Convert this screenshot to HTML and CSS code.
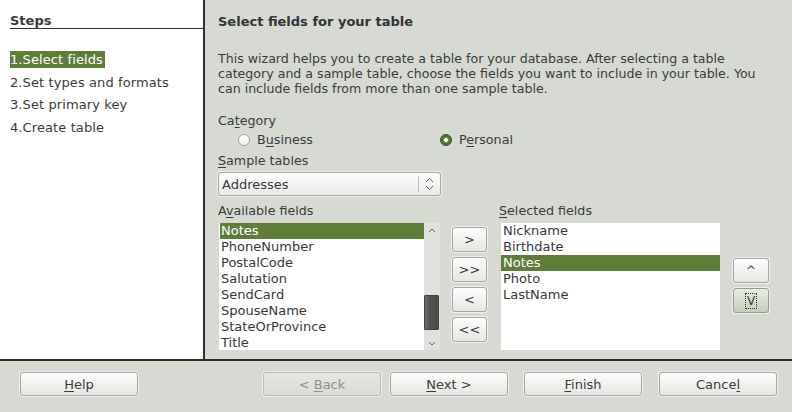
FILE: index.html
```html
<!DOCTYPE html>
<html>
<head>
<meta charset="utf-8">
<link rel="stylesheet" href="styles.css">
</head>
<body>
<div class="window">
  <div class="main">
    <aside class="steps">
      <div class="steps-title">Steps</div>
      <ul class="step-list">
        <li><span class="step active">1.Select fields</span></li>
        <li><span class="step">2.Set types and formats</span></li>
        <li><span class="step">3.Set primary key</span></li>
        <li><span class="step">4.Create table</span></li>
      </ul>
    </aside>
    <section class="content">
      <h1 class="title">Select fields for your table</h1>
      <p class="desc">This wizard helps you to create a table for your database. After selecting a table<br>category and a sample table, choose the fields you want to include in your table. You<br>can include fields from more than one sample table.</p>
      <div class="label label-category">Ca<u>t</u>egory</div>
      <div class="radios">
        <div class="radio"><span class="dot"></span><span>B<u>u</u>siness</span></div>
        <div class="radio"><span class="dot checked"></span><span>P<u>e</u>rsonal</span></div>
      </div>
      <div class="label label-sample"><u>S</u>ample tables</div>
      <div class="combo">
        <span class="combo-text">Addresses</span>
        <span class="combo-spin">
          <svg width="9" height="14" viewBox="0 0 9 14"><path d="M1 5 L4.5 1.5 L8 5" fill="none" stroke="#555" stroke-width="1"/><path d="M1 9 L4.5 12.5 L8 9" fill="none" stroke="#555" stroke-width="1"/></svg>
        </span>
      </div>
      <div class="fields">
        <div class="col-avail">
          <div class="label">A<u>v</u>ailable fields</div>
          <div class="list list-avail">
            <div class="rows">
              <div class="row selected">Notes</div>
              <div class="row">PhoneNumber</div>
              <div class="row">PostalCode</div>
              <div class="row">Salutation</div>
              <div class="row">SendCard</div>
              <div class="row">SpouseName</div>
              <div class="row">StateOrProvince</div>
              <div class="row">Title</div>
            </div>
            <div class="scrollbar">
              <div class="sb-arrow"><svg width="8" height="5" viewBox="0 0 8 5"><path d="M1 4 L4 1 L7 4" fill="none" stroke="#666" stroke-width="1"/></svg></div>
              <div class="sb-thumb"></div>
              <div class="sb-arrow sb-down"><svg width="8" height="5" viewBox="0 0 8 5"><path d="M1 1 L4 4 L7 1" fill="none" stroke="#666" stroke-width="1"/></svg></div>
            </div>
          </div>
        </div>
        <div class="col-moves">
          <div class="btn move-btn">&gt;</div>
          <div class="btn move-btn">&gt;&gt;</div>
          <div class="btn move-btn">&lt;</div>
          <div class="btn move-btn">&lt;&lt;</div>
        </div>
        <div class="col-sel">
          <div class="label"><u>S</u>elected fields</div>
          <div class="list list-sel">
            <div class="rows">
              <div class="row">Nickname</div>
              <div class="row">Birthdate</div>
              <div class="row selected">Notes</div>
              <div class="row">Photo</div>
              <div class="row">LastName</div>
            </div>
          </div>
        </div>
        <div class="col-order">
          <div class="btn order-btn">^</div>
          <div class="btn order-btn pressed"><span class="focus">V</span></div>
        </div>
      </div>
    </section>
  </div>
  <div class="footer">
    <div class="btn foot-btn"><span><u>H</u>elp</span></div>
    <div class="btn foot-btn disabled back"><span>&lt; <u>B</u>ack</span></div>
    <div class="btn foot-btn next"><span><u>N</u>ext &gt;</span></div>
    <div class="btn foot-btn finish"><span><u>F</u>inish</span></div>
    <div class="btn foot-btn cancel"><span>Cance<u>l</u></span></div>
  </div>
</div>
</body>
</html>
```
FILE: styles.css
```css
* { box-sizing: border-box; }
html, body { margin: 0; padding: 0; }
body {
  width: 792px;
  height: 412px;
  overflow: hidden;
  background: #d6dad3;
  font-family: "DejaVu Sans", sans-serif;
  color: #3a3a3a;
}
u { text-decoration: underline; text-underline-offset: 2px; text-decoration-thickness: 1px; }

.window { display: flex; flex-direction: column; height: 412px; }
.main { display: flex; height: 361px; border-bottom: 2px solid #2e302d; }

.steps { width: 205px; background: #fff; border-right: 2px solid #2e302d; }
.steps-title {
  margin: 13px 0 0 10px;
  font-size: 13px;
  font-weight: bold;
  line-height: 15px;
  border-bottom: 1px solid #2e302d;
}
.step-list {
  list-style: none;
  margin: 22px 0 0 10px;
  padding: 0;
  display: flex;
  flex-direction: column;
  gap: 5.7px;
  font-size: 13px;
}
.step { display: inline-block; line-height: 17px; padding-right: 2px; letter-spacing: 0.1px; }
.step.active { background: #5e7d3a; color: #fff; }

.content { flex: 1; padding: 14px 0 0 13px; }
.title { margin: 0; font-size: 13px; font-weight: bold; line-height: 15px; color: #333; }
.desc { margin: 22px 0 0; font-size: 12.6px; line-height: 15px; white-space: nowrap; }
.label { font-size: 12.7px; line-height: 15px; }
.label-category { margin-top: 17px; }
.radios {
  display: grid;
  grid-template-columns: 202px auto;
  align-items: center;
  height: 21px;
  margin: 1px 0 0 20px;
}
.radio { display: flex; align-items: center; gap: 7px; font-size: 12.7px; line-height: 15px; }
.dot {
  width: 12px; height: 12px;
  border-radius: 50%;
  border: 1px solid #a3a6a1;
  background: linear-gradient(#ffffff, #f1f1ef);
}
.dot.checked {
  border: 1px solid #3c5724;
  background: radial-gradient(circle, #ffffff 0 1.6px, #6d8e45 2.2px 3.2px, #4e6c30 3.6px);
}
.label-sample { margin-top: 3px; }

.combo {
  margin-top: 4px;
  width: 223px;
  height: 24px;
  display: flex;
  align-items: center;
  border: 1px solid #a3a6a1;
  border-radius: 3px;
  background: linear-gradient(#fdfdfd, #eaebe8);
  box-shadow: 0 0 0 1px #eef0ec;
  font-size: 13px;
}
.combo-text { flex: 1; padding-left: 3px; }
.combo-spin {
  width: 22px;
  height: 16px;
  border-left: 1px solid #bcbfba;
  display: flex;
  align-items: center;
  justify-content: center;
}

.fields { display: flex; margin-top: 7px; }
.col-avail { width: 223px; }
.col-moves { width: 35px; margin-left: 11px; padding-top: 24px; display: flex; flex-direction: column; gap: 5px; }
.col-sel { width: 222px; margin-left: 12px; }
.col-order { width: 36px; margin-left: 12px; padding-top: 55px; display: flex; flex-direction: column; gap: 5px; }

.list { margin-top: 5px; height: 127px; background: #fff; display: flex; }
.list-avail { margin-left: 1px; width: 221px; }
.list-sel { margin-left: 2px; width: 219px; }
.rows { flex: 1; }
.row { height: 16px; line-height: 16px; padding-left: 2px; font-size: 13px; color: #383838; }
.row.selected { background: #5e7d3a; color: #fff; }
.list-avail .row.selected { margin-left: 1px; padding-left: 1px; }

.scrollbar {
  width: 16px;
  background: #e0e1dd;
  display: flex;
  flex-direction: column;
}
.sb-arrow { height: 14px; display: flex; align-items: center; justify-content: center; }
.sb-thumb {
  margin-top: 58px;
  height: 35px;
  width: 15px;
  border: 1px solid #3f423e;
  border-radius: 1px;
  background: linear-gradient(90deg, #6b6f6a, #50544f 40%, #4a4d49);
}
.sb-down { margin-top: auto; }

.btn {
  display: flex;
  align-items: center;
  justify-content: center;
  border: 1px solid #a3a6a1;
  border-radius: 3px;
  background: linear-gradient(#fdfdfd, #e6e7e4);
  box-shadow: 0 0 0 1px #eef0ec;
  font-size: 13px;
  color: #3a3a3a;
}
.move-btn { width: 35px; height: 25px; }
.order-btn { width: 36px; height: 25px; font-size: 12px; }
.order-btn.pressed { background: linear-gradient(#e9ede3, #c6cdbd); border-color: #959b90; }
.focus {
  display: flex;
  align-items: center;
  justify-content: center;
  width: 12px;
  height: 16px;
  border: 1px dotted #333;
  font-size: 12px;
}

.footer { display: flex; padding: 11px 0 0 20px; }
.foot-btn { width: 118px; height: 24px; }
.back { margin-left: 125px; }
.next { margin-left: 9px; }
.finish { margin-left: 16px; }
.cancel { margin-left: 17px; }
.disabled { color: #8d908b; background: linear-gradient(#e4e6e2, #dadcd7); border-color: #b6b9b4; }
```
